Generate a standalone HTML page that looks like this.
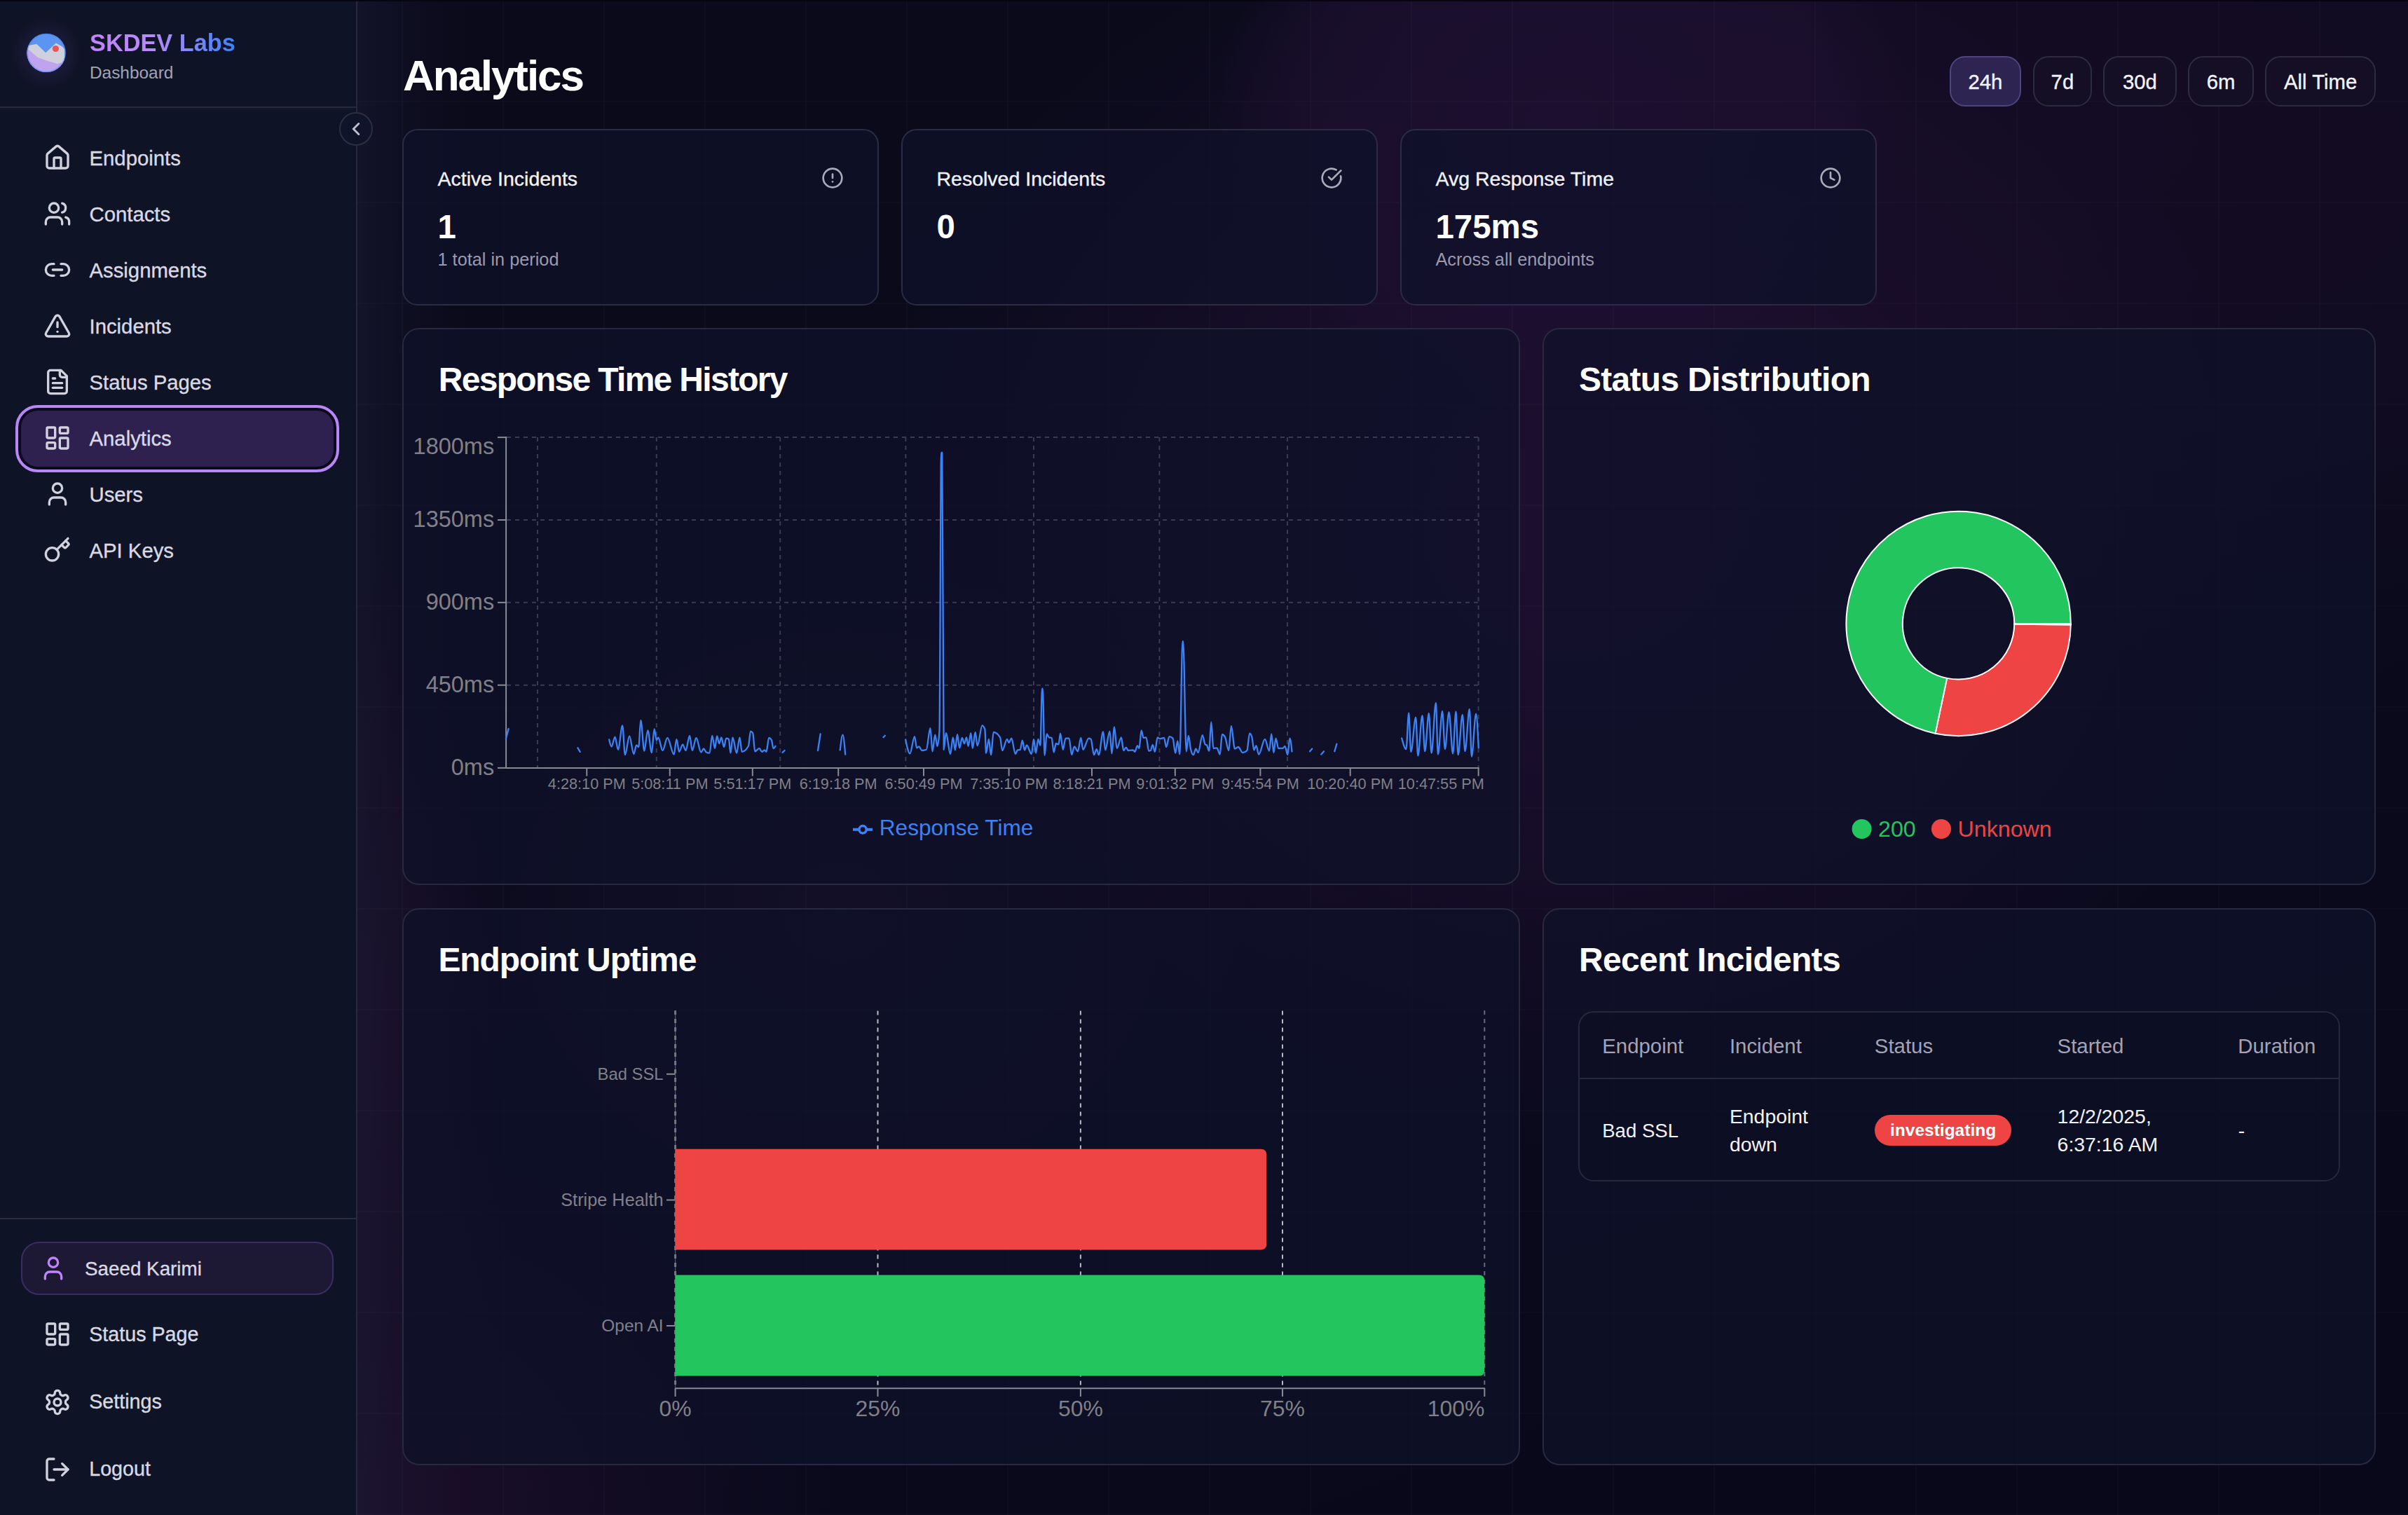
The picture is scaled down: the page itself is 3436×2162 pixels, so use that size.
<!DOCTYPE html><html><head><meta charset="utf-8"><style>
html,body{margin:0;padding:0;}
body{width:3436px;height:2162px;position:relative;overflow:hidden;background:#0b0a1c;font-family:"Liberation Sans",sans-serif;}
.t{position:absolute;white-space:nowrap;}
</style></head><body>
<div style="position:absolute;left:0;top:0;width:3436px;height:2162px;background:radial-gradient(ellipse 1300px 1150px at 2250px 750px, rgba(31,15,50,0.95) 0%, rgba(28,14,46,0.6) 45%, transparent 78%),radial-gradient(ellipse 620px 520px at 2230px 170px, rgba(32,18,54,0.75) 0%, rgba(30,17,50,0.55) 62%, transparent 80%),radial-gradient(ellipse 1500px 850px at 2950px 200px, rgba(20,12,36,0.9) 0%, rgba(20,12,36,0.7) 50%, transparent 85%),radial-gradient(ellipse 1000px 800px at 450px 2162px, rgba(32,15,46,0.9), transparent 75%),radial-gradient(ellipse 800px 700px at 1200px 1300px, rgba(24,20,46,0.6), transparent 75%),radial-gradient(ellipse 260px 900px at 520px 1500px, rgba(34,14,46,0.75), transparent 80%),linear-gradient(160deg,#0a0a1a 0%,#0b0a1c 50%,#08081a 100%);"></div>
<div style="position:absolute;left:510px;top:0px;width:160px;height:2162px;background:linear-gradient(90deg, rgba(26,26,52,0.6) 0%, rgba(24,22,48,0.3) 45%, transparent 100%);"></div>
<div style="position:absolute;left:573px;top:0;width:2px;height:2162px;background:rgba(255,255,255,0.018);"></div><div style="position:absolute;left:717px;top:0;width:2px;height:2162px;background:rgba(255,255,255,0.018);"></div><div style="position:absolute;left:861px;top:0;width:2px;height:2162px;background:rgba(255,255,255,0.018);"></div><div style="position:absolute;left:1005px;top:0;width:2px;height:2162px;background:rgba(255,255,255,0.018);"></div><div style="position:absolute;left:1149px;top:0;width:2px;height:2162px;background:rgba(255,255,255,0.018);"></div><div style="position:absolute;left:1293px;top:0;width:2px;height:2162px;background:rgba(255,255,255,0.018);"></div><div style="position:absolute;left:1437px;top:0;width:2px;height:2162px;background:rgba(255,255,255,0.018);"></div><div style="position:absolute;left:1581px;top:0;width:2px;height:2162px;background:rgba(255,255,255,0.018);"></div><div style="position:absolute;left:1725px;top:0;width:2px;height:2162px;background:rgba(255,255,255,0.018);"></div><div style="position:absolute;left:1869px;top:0;width:2px;height:2162px;background:rgba(255,255,255,0.018);"></div><div style="position:absolute;left:2013px;top:0;width:2px;height:2162px;background:rgba(255,255,255,0.018);"></div><div style="position:absolute;left:2157px;top:0;width:2px;height:2162px;background:rgba(255,255,255,0.018);"></div><div style="position:absolute;left:2301px;top:0;width:2px;height:2162px;background:rgba(255,255,255,0.018);"></div><div style="position:absolute;left:2445px;top:0;width:2px;height:2162px;background:rgba(255,255,255,0.018);"></div><div style="position:absolute;left:2589px;top:0;width:2px;height:2162px;background:rgba(255,255,255,0.018);"></div><div style="position:absolute;left:2733px;top:0;width:2px;height:2162px;background:rgba(255,255,255,0.018);"></div><div style="position:absolute;left:2877px;top:0;width:2px;height:2162px;background:rgba(255,255,255,0.018);"></div><div style="position:absolute;left:3021px;top:0;width:2px;height:2162px;background:rgba(255,255,255,0.018);"></div><div style="position:absolute;left:3165px;top:0;width:2px;height:2162px;background:rgba(255,255,255,0.018);"></div><div style="position:absolute;left:3309px;top:0;width:2px;height:2162px;background:rgba(255,255,255,0.018);"></div><div style="position:absolute;left:510px;top:0px;width:2926px;height:2px;background:rgba(255,255,255,0.018);"></div><div style="position:absolute;left:510px;top:144px;width:2926px;height:2px;background:rgba(255,255,255,0.018);"></div><div style="position:absolute;left:510px;top:288px;width:2926px;height:2px;background:rgba(255,255,255,0.018);"></div><div style="position:absolute;left:510px;top:432px;width:2926px;height:2px;background:rgba(255,255,255,0.018);"></div><div style="position:absolute;left:510px;top:576px;width:2926px;height:2px;background:rgba(255,255,255,0.018);"></div><div style="position:absolute;left:510px;top:720px;width:2926px;height:2px;background:rgba(255,255,255,0.018);"></div><div style="position:absolute;left:510px;top:864px;width:2926px;height:2px;background:rgba(255,255,255,0.018);"></div><div style="position:absolute;left:510px;top:1008px;width:2926px;height:2px;background:rgba(255,255,255,0.018);"></div><div style="position:absolute;left:510px;top:1152px;width:2926px;height:2px;background:rgba(255,255,255,0.018);"></div><div style="position:absolute;left:510px;top:1296px;width:2926px;height:2px;background:rgba(255,255,255,0.018);"></div><div style="position:absolute;left:510px;top:1440px;width:2926px;height:2px;background:rgba(255,255,255,0.018);"></div><div style="position:absolute;left:510px;top:1584px;width:2926px;height:2px;background:rgba(255,255,255,0.018);"></div><div style="position:absolute;left:510px;top:1728px;width:2926px;height:2px;background:rgba(255,255,255,0.018);"></div><div style="position:absolute;left:510px;top:1872px;width:2926px;height:2px;background:rgba(255,255,255,0.018);"></div><div style="position:absolute;left:510px;top:2016px;width:2926px;height:2px;background:rgba(255,255,255,0.018);"></div><div style="position:absolute;left:510px;top:2160px;width:2926px;height:2px;background:rgba(255,255,255,0.018);"></div>
<div style="position:absolute;left:0px;top:0px;width:3436px;height:2px;box-sizing:border-box;background:#07060f;"></div>
<div style="position:absolute;left:0px;top:2px;width:508px;height:2160px;box-sizing:border-box;background:#0f1326;"></div>
<div style="position:absolute;left:508px;top:2px;width:2px;height:2160px;box-sizing:border-box;background:#262a3c;"></div>
<div style="position:absolute;left:0px;top:152px;width:508px;height:2px;box-sizing:border-box;background:#262a3c;"></div>
<div style="position:absolute;left:0px;top:1738px;width:508px;height:2px;box-sizing:border-box;background:#2a2b3f;"></div>
<div style="position:absolute;left:10px;top:20px;width:112px;height:112px;border-radius:50%;background:radial-gradient(circle, rgba(120,80,200,0.22), transparent 65%);"></div>
<svg style="position:absolute;left:30px;top:40px" width="72" height="72" viewBox="0 0 72 72"><defs><clipPath id="lc"><circle cx="36.1" cy="35.5" r="27.6"/></clipPath></defs><g clip-path="url(#lc)"><rect x="0" y="0" width="72" height="72" fill="#5b95f2"/><path d="M0,26 L12,24.7 L22.3,22.8 L35.2,35.2 L49.9,21.4 L58.9,26.6 L62,30 L62,50 L50,62 L20,64 L6,50 Z" fill="#d0d0dc"/><path d="M0,31 L11,31 L24,42 L38,47 L52,51 L58,49 L56,60 L40,66 L20,66 L6,56 Z" fill="#bfa3ef"/><circle cx="49.4" cy="29.5" r="4.6" fill="#e8545a"/></g><circle cx="36.1" cy="35.5" r="27" fill="none" stroke="#4a86ee" stroke-width="1.6" stroke-opacity="0.6"/></svg>
<div class="t" style="left:128.00px;top:43.56px;font-size:34.3px;line-height:34.3px;color:#fff;font-weight:700;background:linear-gradient(90deg,#c084fc 0%,#b68af9 45%,#3b82f6 100%);-webkit-background-clip:text;background-clip:text;color:transparent;">SKDEV Labs</div>
<div class="t" style="left:128.00px;top:91.94px;font-size:24.4px;line-height:24.4px;color:#a3a3b3;">Dashboard</div>
<div style="position:absolute;left:484px;top:160px;width:48px;height:48px;box-sizing:border-box;border-radius:50%;border:2px solid #2b2f42;background:#10142a;"></div>
<svg style="position:absolute;left:493px;top:169px;" width="30" height="30" viewBox="0 0 24 24" fill="none" stroke="#bdbdcb" stroke-width="2.4" stroke-linecap="round" stroke-linejoin="round"><path d="m15 18-6-6 6-6"/></svg>
<div style="position:absolute;left:22px;top:578px;width:462px;height:96px;box-sizing:border-box;border:4px solid #b986f6;border-radius:32px;background:#2e2150;box-shadow:inset 0 0 0 4px #0a0a1a;"></div>
<svg style="position:absolute;left:62px;top:205px;" width="40" height="40" viewBox="0 0 24 24" fill="none" stroke="#d2d2de" stroke-width="2" stroke-linecap="round" stroke-linejoin="round"><path d="M15 21v-8a1 1 0 0 0-1-1h-4a1 1 0 0 0-1 1v8"/><path d="M3 10a2 2 0 0 1 .709-1.528l7-5.999a2 2 0 0 1 2.582 0l7 5.999A2 2 0 0 1 21 10v9a2 2 0 0 1-2 2H5a2 2 0 0 1-2-2z"/></svg>
<div class="t" style="left:127.50px;top:211.19px;font-size:29.3px;line-height:29.3px;color:#d9d9e3;-webkit-text-stroke:0.35px currentColor;">Endpoints</div>
<svg style="position:absolute;left:62px;top:285px;" width="40" height="40" viewBox="0 0 24 24" fill="none" stroke="#d2d2de" stroke-width="2" stroke-linecap="round" stroke-linejoin="round"><path d="M16 21v-2a4 4 0 0 0-4-4H6a4 4 0 0 0-4 4v2"/><path d="M16 3.128a4 4 0 0 1 0 7.744"/><path d="M22 21v-2a4 4 0 0 0-3-3.87"/><circle cx="9" cy="7" r="4"/></svg>
<div class="t" style="left:127.50px;top:291.19px;font-size:29.3px;line-height:29.3px;color:#d9d9e3;-webkit-text-stroke:0.35px currentColor;">Contacts</div>
<svg style="position:absolute;left:62px;top:365px;" width="40" height="40" viewBox="0 0 24 24" fill="none" stroke="#d2d2de" stroke-width="2" stroke-linecap="round" stroke-linejoin="round"><path d="M9 17H7A5 5 0 0 1 7 7h2"/><path d="M15 7h2a5 5 0 1 1 0 10h-2"/><line x1="8" x2="16" y1="12" y2="12"/></svg>
<div class="t" style="left:127.50px;top:371.19px;font-size:29.3px;line-height:29.3px;color:#d9d9e3;-webkit-text-stroke:0.35px currentColor;">Assignments</div>
<svg style="position:absolute;left:62px;top:445px;" width="40" height="40" viewBox="0 0 24 24" fill="none" stroke="#d2d2de" stroke-width="2" stroke-linecap="round" stroke-linejoin="round"><path d="m21.73 18-8-14a2 2 0 0 0-3.48 0l-8 14A2 2 0 0 0 4 21h16a2 2 0 0 0 1.73-3"/><path d="M12 9v4"/><path d="M12 17h.01"/></svg>
<div class="t" style="left:127.50px;top:451.19px;font-size:29.3px;line-height:29.3px;color:#d9d9e3;-webkit-text-stroke:0.35px currentColor;">Incidents</div>
<svg style="position:absolute;left:62px;top:525px;" width="40" height="40" viewBox="0 0 24 24" fill="none" stroke="#d2d2de" stroke-width="2" stroke-linecap="round" stroke-linejoin="round"><path d="M15 2H6a2 2 0 0 0-2 2v16a2 2 0 0 0 2 2h12a2 2 0 0 0 2-2V7Z"/><path d="M14 2v4a2 2 0 0 0 2 2h4"/><path d="M10 9H8"/><path d="M16 13H8"/><path d="M16 17H8"/></svg>
<div class="t" style="left:127.50px;top:531.19px;font-size:29.3px;line-height:29.3px;color:#d9d9e3;-webkit-text-stroke:0.35px currentColor;">Status Pages</div>
<svg style="position:absolute;left:62px;top:605px;" width="40" height="40" viewBox="0 0 24 24" fill="none" stroke="#d2d2de" stroke-width="2" stroke-linecap="round" stroke-linejoin="round"><rect width="7" height="9" x="3" y="3" rx="1"/><rect width="7" height="5" x="14" y="3" rx="1"/><rect width="7" height="9" x="14" y="12" rx="1"/><rect width="7" height="5" x="3" y="16" rx="1"/></svg>
<div class="t" style="left:127.50px;top:611.19px;font-size:29.3px;line-height:29.3px;color:#d9d9e3;-webkit-text-stroke:0.35px currentColor;">Analytics</div>
<svg style="position:absolute;left:62px;top:685px;" width="40" height="40" viewBox="0 0 24 24" fill="none" stroke="#d2d2de" stroke-width="2" stroke-linecap="round" stroke-linejoin="round"><path d="M19 21v-2a4 4 0 0 0-4-4H9a4 4 0 0 0-4 4v2"/><circle cx="12" cy="7" r="4"/></svg>
<div class="t" style="left:127.50px;top:691.19px;font-size:29.3px;line-height:29.3px;color:#d9d9e3;-webkit-text-stroke:0.35px currentColor;">Users</div>
<svg style="position:absolute;left:62px;top:765px;" width="40" height="40" viewBox="0 0 24 24" fill="none" stroke="#d2d2de" stroke-width="2" stroke-linecap="round" stroke-linejoin="round"><path d="m15.5 7.5 2.3 2.3a1 1 0 0 0 1.4 0l2.1-2.1a1 1 0 0 0 0-1.4L19 4"/><path d="m21 2-9.6 9.6"/><circle cx="7.5" cy="15.5" r="5.5"/></svg>
<div class="t" style="left:127.50px;top:771.19px;font-size:29.3px;line-height:29.3px;color:#d9d9e3;-webkit-text-stroke:0.35px currentColor;">API Keys</div>
<div style="position:absolute;left:30px;top:1772px;width:446px;height:76px;box-sizing:border-box;background:#1d1934;border:2px solid #3a2d66;border-radius:26px;"></div>
<svg style="position:absolute;left:56px;top:1790px;" width="40" height="40" viewBox="0 0 24 24" fill="none" stroke="#c084fc" stroke-width="2" stroke-linecap="round" stroke-linejoin="round"><path d="M19 21v-2a4 4 0 0 0-4-4H9a4 4 0 0 0-4 4v2"/><circle cx="12" cy="7" r="4"/></svg>
<div class="t" style="left:121.00px;top:1796.96px;font-size:27.8px;line-height:27.8px;color:#d9d9e3;-webkit-text-stroke:0.35px currentColor;">Saeed Karimi</div>
<svg style="position:absolute;left:62px;top:1884.4px;" width="40" height="40" viewBox="0 0 24 24" fill="none" stroke="#d2d2de" stroke-width="2" stroke-linecap="round" stroke-linejoin="round"><rect width="7" height="9" x="3" y="3" rx="1"/><rect width="7" height="5" x="14" y="3" rx="1"/><rect width="7" height="9" x="14" y="12" rx="1"/><rect width="7" height="5" x="3" y="16" rx="1"/></svg>
<div class="t" style="left:127.20px;top:1890.10px;font-size:28.7px;line-height:28.7px;color:#d9d9e3;-webkit-text-stroke:0.35px currentColor;">Status Page</div>
<svg style="position:absolute;left:62px;top:1980.5px;" width="40" height="40" viewBox="0 0 24 24" fill="none" stroke="#d2d2de" stroke-width="2" stroke-linecap="round" stroke-linejoin="round"><path d="M12.22 2h-.44a2 2 0 0 0-2 2v.18a2 2 0 0 1-1 1.73l-.43.25a2 2 0 0 1-2 0l-.15-.08a2 2 0 0 0-2.73.73l-.22.38a2 2 0 0 0 .73 2.73l.15.1a2 2 0 0 1 1 1.72v.51a2 2 0 0 1-1 1.74l-.15.09a2 2 0 0 0-.73 2.73l.22.38a2 2 0 0 0 2.73.73l.15-.08a2 2 0 0 1 2 0l.43.25a2 2 0 0 1 1 1.73V20a2 2 0 0 0 2 2h.44a2 2 0 0 0 2-2v-.18a2 2 0 0 1 1-1.73l.43-.25a2 2 0 0 1 2 0l.15.08a2 2 0 0 0 2.73-.73l.22-.39a2 2 0 0 0-.73-2.73l-.15-.08a2 2 0 0 1-1-1.74v-.5a2 2 0 0 1 1-1.74l.15-.09a2 2 0 0 0 .73-2.73l-.22-.38a2 2 0 0 0-2.73-.73l-.15.08a2 2 0 0 1-2 0l-.43-.25a2 2 0 0 1-1-1.73V4a2 2 0 0 0-2-2z"/><circle cx="12" cy="12" r="3"/></svg>
<div class="t" style="left:127.20px;top:1986.20px;font-size:28.7px;line-height:28.7px;color:#d9d9e3;-webkit-text-stroke:0.35px currentColor;">Settings</div>
<svg style="position:absolute;left:62px;top:2076.5px;" width="40" height="40" viewBox="0 0 24 24" fill="none" stroke="#d2d2de" stroke-width="2" stroke-linecap="round" stroke-linejoin="round"><path d="m16 17 5-5-5-5"/><path d="M21 12H9"/><path d="M9 21H5a2 2 0 0 1-2-2V5a2 2 0 0 1 2-2h4"/></svg>
<div class="t" style="left:127.20px;top:2082.20px;font-size:28.7px;line-height:28.7px;color:#d9d9e3;-webkit-text-stroke:0.35px currentColor;">Logout</div>
<div class="t" style="left:575.00px;top:76.80px;font-size:62px;line-height:62px;color:#fff;font-weight:700;letter-spacing:-2.1px;">Analytics</div>
<div style="position:absolute;left:2781.6px;top:80px;width:102.70000000000027px;height:72px;box-sizing:border-box;background:#2d2452;border:2px solid #4b4680;border-radius:22px;"></div>
<div class="t" style="left:2682.95px;top:101.69px;font-size:29.3px;line-height:29.3px;color:#f4f4f8;width:300px;text-align:center;-webkit-text-stroke:0.35px currentColor;">24h</div>
<div style="position:absolute;left:2901px;top:80px;width:83.80000000000018px;height:72px;box-sizing:border-box;background:#150f26;border:2px solid #2c2c40;border-radius:22px;"></div>
<div class="t" style="left:2792.90px;top:101.69px;font-size:29.3px;line-height:29.3px;color:#f4f4f8;width:300px;text-align:center;-webkit-text-stroke:0.35px currentColor;">7d</div>
<div style="position:absolute;left:3001.3px;top:80px;width:104.29999999999973px;height:72px;box-sizing:border-box;background:#150f26;border:2px solid #2c2c40;border-radius:22px;"></div>
<div class="t" style="left:2903.45px;top:101.69px;font-size:29.3px;line-height:29.3px;color:#f4f4f8;width:300px;text-align:center;-webkit-text-stroke:0.35px currentColor;">30d</div>
<div style="position:absolute;left:3122.4px;top:80px;width:93.5px;height:72px;box-sizing:border-box;background:#150f26;border:2px solid #2c2c40;border-radius:22px;"></div>
<div class="t" style="left:3019.15px;top:101.69px;font-size:29.3px;line-height:29.3px;color:#f4f4f8;width:300px;text-align:center;-webkit-text-stroke:0.35px currentColor;">6m</div>
<div style="position:absolute;left:3232.4px;top:80px;width:157.4000000000001px;height:72px;box-sizing:border-box;background:#150f26;border:2px solid #2c2c40;border-radius:22px;"></div>
<div class="t" style="left:3161.10px;top:101.69px;font-size:29.3px;line-height:29.3px;color:#f4f4f8;width:300px;text-align:center;-webkit-text-stroke:0.35px currentColor;">All Time</div>
<div style="position:absolute;left:574px;top:184px;width:680px;height:252px;box-sizing:border-box;background:rgba(15,18,42,0.74);border:2px solid #2b2c44;border-radius:22px;"></div>
<div class="t" style="left:624.50px;top:240.57px;font-size:28.5px;line-height:28.5px;color:#f2f2f6;-webkit-text-stroke:0.35px currentColor;">Active Incidents</div>
<div class="t" style="left:624.50px;top:299.87px;font-size:47.4px;line-height:47.4px;color:#ffffff;font-weight:700;">1</div>
<div class="t" style="left:624.50px;top:357.88px;font-size:25.3px;line-height:25.3px;color:#9a9aae;">1 total in period</div>
<svg style="position:absolute;left:1172px;top:238px;" width="32" height="32" viewBox="0 0 24 24" fill="none" stroke="#aaaab9" stroke-width="2" stroke-linecap="round" stroke-linejoin="round"><circle cx="12" cy="12" r="10"/><line x1="12" x2="12" y1="8" y2="12"/><line x1="12" x2="12.01" y1="16" y2="16"/></svg>
<div style="position:absolute;left:1286px;top:184px;width:680px;height:252px;box-sizing:border-box;background:rgba(15,18,42,0.74);border:2px solid #2b2c44;border-radius:22px;"></div>
<div class="t" style="left:1336.50px;top:240.57px;font-size:28.5px;line-height:28.5px;color:#f2f2f6;-webkit-text-stroke:0.35px currentColor;">Resolved Incidents</div>
<div class="t" style="left:1336.50px;top:299.87px;font-size:47.4px;line-height:47.4px;color:#ffffff;font-weight:700;">0</div>
<svg style="position:absolute;left:1884px;top:238px;" width="32" height="32" viewBox="0 0 24 24" fill="none" stroke="#aaaab9" stroke-width="2" stroke-linecap="round" stroke-linejoin="round"><path d="M21.801 10A10 10 0 1 1 17 3.335"/><path d="m9 11 3 3L22 4"/></svg>
<div style="position:absolute;left:1998px;top:184px;width:680px;height:252px;box-sizing:border-box;background:rgba(15,18,42,0.74);border:2px solid #2b2c44;border-radius:22px;"></div>
<div class="t" style="left:2048.50px;top:240.57px;font-size:28.5px;line-height:28.5px;color:#f2f2f6;-webkit-text-stroke:0.35px currentColor;">Avg Response Time</div>
<div class="t" style="left:2048.50px;top:299.87px;font-size:47.4px;line-height:47.4px;color:#ffffff;font-weight:700;">175ms</div>
<div class="t" style="left:2048.50px;top:357.88px;font-size:25.3px;line-height:25.3px;color:#9a9aae;">Across all endpoints</div>
<svg style="position:absolute;left:2596px;top:238px;" width="32" height="32" viewBox="0 0 24 24" fill="none" stroke="#aaaab9" stroke-width="2" stroke-linecap="round" stroke-linejoin="round"><circle cx="12" cy="12" r="10"/><polyline points="12 6 12 12 16 14"/></svg>
<div style="position:absolute;left:574px;top:468px;width:1595px;height:795px;box-sizing:border-box;background:rgba(15,18,42,0.74);border:2px solid #28283e;border-radius:24px;"></div>
<div style="position:absolute;left:2201px;top:468px;width:1189px;height:795px;box-sizing:border-box;background:rgba(15,18,42,0.74);border:2px solid #28283e;border-radius:24px;"></div>
<div style="position:absolute;left:574px;top:1296px;width:1595px;height:795px;box-sizing:border-box;background:rgba(15,18,42,0.74);border:2px solid #28283e;border-radius:24px;"></div>
<div style="position:absolute;left:2201px;top:1296px;width:1189px;height:795px;box-sizing:border-box;background:rgba(15,18,42,0.74);border:2px solid #28283e;border-radius:24px;"></div>
<div class="t" style="left:625.70px;top:517.86px;font-size:48px;line-height:48px;color:#fff;font-weight:700;letter-spacing:-1.69px;">Response Time History</div>
<div class="t" style="left:2252.90px;top:517.86px;font-size:48px;line-height:48px;color:#fff;font-weight:700;letter-spacing:-0.7px;">Status Distribution</div>
<div class="t" style="left:625.40px;top:1345.86px;font-size:48px;line-height:48px;color:#fff;font-weight:700;letter-spacing:-1.07px;">Endpoint Uptime</div>
<div class="t" style="left:2253.00px;top:1346.36px;font-size:48px;line-height:48px;color:#fff;font-weight:700;letter-spacing:-0.7px;">Recent Incidents</div>
<svg style="position:absolute;left:0;top:0" width="3436" height="2162" viewBox="0 0 3436 2162"><line x1="723" y1="624.1" x2="2109.6" y2="624.1" stroke="#3a3b52" stroke-width="2" stroke-dasharray="6 6"/>
<line x1="723" y1="742.0" x2="2109.6" y2="742.0" stroke="#3a3b52" stroke-width="2" stroke-dasharray="6 6"/>
<line x1="723" y1="859.8" x2="2109.6" y2="859.8" stroke="#3a3b52" stroke-width="2" stroke-dasharray="6 6"/>
<line x1="723" y1="977.7" x2="2109.6" y2="977.7" stroke="#3a3b52" stroke-width="2" stroke-dasharray="6 6"/>
<line x1="767" y1="624.1" x2="767" y2="1095.5" stroke="#3a3b52" stroke-width="2" stroke-dasharray="6 6"/>
<line x1="936.8" y1="624.1" x2="936.8" y2="1095.5" stroke="#3a3b52" stroke-width="2" stroke-dasharray="6 6"/>
<line x1="1113.2" y1="624.1" x2="1113.2" y2="1095.5" stroke="#3a3b52" stroke-width="2" stroke-dasharray="6 6"/>
<line x1="1292.3" y1="624.1" x2="1292.3" y2="1095.5" stroke="#3a3b52" stroke-width="2" stroke-dasharray="6 6"/>
<line x1="1475" y1="624.1" x2="1475" y2="1095.5" stroke="#3a3b52" stroke-width="2" stroke-dasharray="6 6"/>
<line x1="1654.4" y1="624.1" x2="1654.4" y2="1095.5" stroke="#3a3b52" stroke-width="2" stroke-dasharray="6 6"/>
<line x1="1837" y1="624.1" x2="1837" y2="1095.5" stroke="#3a3b52" stroke-width="2" stroke-dasharray="6 6"/>
<line x1="2109.6" y1="624.1" x2="2109.6" y2="1095.5" stroke="#3a3b52" stroke-width="2" stroke-dasharray="6 6"/>
<line x1="722.1" y1="623" x2="722.1" y2="1096.5" stroke="#8a8a92" stroke-width="2"/>
<line x1="721" y1="1095.9" x2="2110.6" y2="1095.9" stroke="#8a8a92" stroke-width="2"/>
<line x1="710" y1="624.1" x2="722" y2="624.1" stroke="#8a8a92" stroke-width="2"/>
<line x1="710" y1="742.0" x2="722" y2="742.0" stroke="#8a8a92" stroke-width="2"/>
<line x1="710" y1="859.8" x2="722" y2="859.8" stroke="#8a8a92" stroke-width="2"/>
<line x1="710" y1="977.7" x2="722" y2="977.7" stroke="#8a8a92" stroke-width="2"/>
<line x1="710" y1="1095.9" x2="722" y2="1095.9" stroke="#8a8a92" stroke-width="2"/>
<line x1="837.3" y1="1096" x2="837.3" y2="1107.5" stroke="#8a8a92" stroke-width="2"/>
<line x1="955.8" y1="1096" x2="955.8" y2="1107.5" stroke="#8a8a92" stroke-width="2"/>
<line x1="1073.8" y1="1096" x2="1073.8" y2="1107.5" stroke="#8a8a92" stroke-width="2"/>
<line x1="1196.2" y1="1096" x2="1196.2" y2="1107.5" stroke="#8a8a92" stroke-width="2"/>
<line x1="1318" y1="1096" x2="1318" y2="1107.5" stroke="#8a8a92" stroke-width="2"/>
<line x1="1439.6" y1="1096" x2="1439.6" y2="1107.5" stroke="#8a8a92" stroke-width="2"/>
<line x1="1558" y1="1096" x2="1558" y2="1107.5" stroke="#8a8a92" stroke-width="2"/>
<line x1="1676.8" y1="1096" x2="1676.8" y2="1107.5" stroke="#8a8a92" stroke-width="2"/>
<line x1="1798.4" y1="1096" x2="1798.4" y2="1107.5" stroke="#8a8a92" stroke-width="2"/>
<line x1="1926.7" y1="1096" x2="1926.7" y2="1107.5" stroke="#8a8a92" stroke-width="2"/>
<line x1="2109.6" y1="1096" x2="2109.6" y2="1107.5" stroke="#8a8a92" stroke-width="2"/>
<path d="M721.9,1054.2 L725.6,1039.9" fill="none" stroke="#3b82f6" stroke-width="2.3" stroke-linejoin="round" stroke-linecap="round"/>
<path d="M824.4,1067.3 L827.7,1072.9" fill="none" stroke="#3b82f6" stroke-width="2.3" stroke-linejoin="round" stroke-linecap="round"/>
<path d="M869.2,1055.4 C870.35,1060.42 871.47,1065.40 872.6,1065.4 C874.25,1065.40 875.92,1051.70 877.6,1051.7 C879.03,1051.70 880.48,1069.76 881.9,1069.8 C884.01,1069.76 886.09,1035.51 888.2,1035.5 C889.41,1035.51 890.66,1077.24 891.9,1077.2 C893.98,1077.24 896.06,1050.45 898.1,1050.5 C900.21,1050.45 902.28,1075.99 904.4,1076.0 C905.61,1075.99 906.85,1063.54 908.1,1063.5 C909.14,1063.54 910.17,1066.03 911.2,1066.0 C912.25,1066.03 913.29,1028.03 914.3,1028.0 C915.99,1028.03 917.65,1071.63 919.3,1071.6 C920.97,1071.63 922.63,1042.36 924.3,1042.4 C926.16,1042.36 928.03,1074.12 929.9,1074.1 C931.15,1074.12 932.39,1040.49 933.6,1040.5 C934.68,1040.49 935.71,1056.06 936.8,1056.1 C937.58,1056.06 938.41,1052.32 939.2,1052.3 C941.32,1052.32 943.40,1071.01 945.5,1071.0 C947.76,1071.01 950.04,1052.95 952.3,1052.9 C955.44,1052.95 958.55,1076.62 961.7,1076.6 C962.91,1076.62 964.16,1054.81 965.4,1054.8 C966.65,1054.81 967.90,1072.88 969.1,1072.9 C970.80,1072.88 972.46,1062.29 974.1,1062.3 C975.58,1062.29 977.03,1071.01 978.5,1071.0 C980.35,1071.01 982.22,1049.83 984.1,1049.8 C985.34,1049.83 986.58,1071.01 987.8,1071.0 C989.70,1071.01 991.57,1052.95 993.4,1052.9 C995.72,1052.95 998.00,1073.50 1000.3,1073.5 C1001.53,1073.50 1002.78,1068.52 1004.0,1068.5 C1005.27,1068.52 1006.52,1072.85 1007.8,1073.5 C1009.34,1074.33 1010.92,1074.75 1012.5,1074.7 C1013.74,1074.75 1014.98,1049.83 1016.2,1049.8 C1017.47,1049.83 1018.72,1067.90 1020.0,1067.9 C1021.00,1067.90 1022.04,1050.45 1023.1,1050.5 C1024.12,1050.45 1025.16,1061.04 1026.2,1061.0 C1027.23,1061.04 1028.27,1052.32 1029.3,1052.3 C1030.56,1052.32 1031.80,1066.03 1033.0,1066.0 C1034.09,1066.03 1035.12,1053.57 1036.2,1053.6 C1037.41,1053.57 1038.65,1053.98 1039.9,1054.8 C1040.73,1055.37 1041.56,1074.75 1042.4,1074.7 C1043.43,1074.75 1044.47,1052.32 1045.5,1052.3 C1047.37,1052.32 1049.24,1074.75 1051.1,1074.7 C1052.56,1074.75 1054.02,1052.32 1055.5,1052.3 C1056.51,1052.32 1057.55,1072.88 1058.6,1072.9 C1061.70,1072.88 1064.81,1070.18 1067.9,1064.8 C1068.97,1062.98 1070.01,1043.60 1071.0,1043.6 C1072.08,1043.60 1073.12,1044.43 1074.2,1046.1 C1075.20,1047.76 1076.23,1072.26 1077.3,1072.3 C1079.35,1072.26 1081.43,1067.90 1083.5,1067.9 C1084.75,1067.90 1085.99,1072.88 1087.2,1072.9 C1088.49,1072.88 1089.73,1070.39 1091.0,1070.4 C1091.81,1070.39 1092.64,1072.88 1093.5,1072.9 C1094.71,1072.88 1095.96,1052.95 1097.2,1052.9 C1098.45,1052.95 1099.70,1053.98 1100.9,1056.1 C1101.77,1057.45 1102.60,1067.90 1103.4,1067.9 C1104.47,1067.90 1105.51,1066.34 1106.5,1064.8" fill="none" stroke="#3b82f6" stroke-width="2.3" stroke-linejoin="round" stroke-linecap="round"/>
<path d="M1116.5,1073.8 L1119.6,1071.0" fill="none" stroke="#3b82f6" stroke-width="2.3" stroke-linejoin="round" stroke-linecap="round"/>
<path d="M1167.0,1071.0 L1170.7,1047.3" fill="none" stroke="#3b82f6" stroke-width="2.3" stroke-linejoin="round" stroke-linecap="round"/>
<path d="M1198.7,1070.4 C1199.98,1059.49 1201.23,1048.59 1202.5,1048.6 C1203.72,1048.59 1204.97,1062.60 1206.2,1076.6" fill="none" stroke="#3b82f6" stroke-width="2.3" stroke-linejoin="round" stroke-linecap="round"/>
<path d="M1260.4,1052.3 L1262.9,1049.8" fill="none" stroke="#3b82f6" stroke-width="2.3" stroke-linejoin="round" stroke-linecap="round"/>
<path d="M1292.2,1055.4 C1294.25,1065.40 1296.33,1075.37 1298.4,1075.4 C1300.60,1075.37 1302.79,1051.08 1305.0,1051.1 C1306.02,1051.08 1307.06,1067.27 1308.1,1067.3 C1309.14,1067.27 1310.17,1065.40 1311.2,1065.4 C1312.67,1065.40 1314.12,1071.01 1315.6,1071.0 C1317.65,1071.01 1319.73,1070.60 1321.8,1069.8 C1323.67,1069.02 1325.54,1039.24 1327.4,1039.2 C1328.45,1039.24 1329.48,1072.26 1330.5,1072.3 C1331.77,1072.26 1333.01,1048.59 1334.3,1048.6 C1335.30,1048.59 1336.34,1064.78 1337.4,1064.8 C1338.41,1064.78 1339.45,1057.72 1340.5,1043.6 C1341.33,1032.22 1342.16,646.00 1343.0,646.0 C1343.43,646.00 1343.87,646.00 1344.3,646.0 C1345.11,646.00 1345.91,1069.76 1346.7,1069.8 C1347.76,1069.76 1348.79,1046.09 1349.8,1046.1 C1351.91,1046.09 1353.98,1075.99 1356.1,1076.0 C1357.31,1075.99 1358.55,1052.32 1359.8,1052.3 C1360.84,1052.32 1361.87,1070.39 1362.9,1070.4 C1363.95,1070.39 1364.99,1047.96 1366.0,1048.0 C1367.07,1047.96 1368.10,1067.27 1369.1,1067.3 C1370.39,1067.27 1371.63,1052.95 1372.9,1052.9 C1373.92,1052.95 1374.96,1061.04 1376.0,1061.0 C1377.03,1061.04 1378.07,1052.32 1379.1,1052.3 C1379.94,1052.32 1380.77,1064.78 1381.6,1064.8 C1382.85,1064.78 1384.09,1046.09 1385.3,1046.1 C1386.17,1046.09 1387.00,1067.90 1387.8,1067.9 C1389.07,1067.90 1390.32,1044.85 1391.6,1044.8 C1392.60,1044.85 1393.64,1064.16 1394.7,1064.2 C1396.96,1064.16 1399.25,1035.51 1401.5,1035.5 C1402.78,1035.51 1404.02,1037.17 1405.3,1040.5 C1405.89,1042.15 1406.52,1074.75 1407.1,1074.7 C1408.38,1074.75 1409.63,1054.81 1410.9,1054.8 C1411.91,1054.81 1412.95,1077.24 1414.0,1077.2 C1415.24,1077.24 1416.48,1044.85 1417.7,1044.8 C1420.84,1044.85 1423.96,1047.34 1427.1,1052.3 C1428.11,1053.98 1429.15,1071.01 1430.2,1071.0 C1432.47,1071.01 1434.75,1054.81 1437.0,1054.8 C1437.87,1054.81 1438.70,1059.80 1439.5,1059.8 C1440.77,1059.80 1442.02,1053.57 1443.3,1053.6 C1445.14,1053.57 1447.00,1075.99 1448.9,1076.0 C1449.91,1075.99 1450.95,1070.73 1452.0,1070.4 C1453.23,1069.97 1454.48,1070.18 1455.7,1069.8 C1456.76,1069.42 1457.80,1056.68 1458.8,1056.7 C1459.88,1056.68 1460.92,1070.39 1462.0,1070.4 C1462.99,1070.39 1464.03,1063.54 1465.1,1063.5 C1467.35,1063.54 1469.64,1075.99 1471.9,1076.0 C1472.96,1075.99 1474.00,1054.81 1475.0,1054.8 C1476.07,1054.81 1477.11,1074.75 1478.1,1074.7 C1479.19,1074.75 1480.23,1054.81 1481.3,1054.8 C1482.30,1054.81 1483.34,1063.54 1484.4,1063.5 C1485.25,1063.54 1486.13,982.70 1487.0,982.7 C1487.27,982.70 1487.53,982.70 1487.8,982.7 C1488.74,982.70 1489.67,1077.86 1490.6,1077.9 C1491.64,1077.86 1492.68,1047.34 1493.7,1047.3 C1494.76,1047.34 1495.80,1051.98 1496.8,1052.3 C1498.08,1052.74 1499.33,1052.53 1500.6,1052.9 C1501.61,1053.29 1502.65,1073.50 1503.7,1073.5 C1504.73,1073.50 1505.76,1061.04 1506.8,1061.0 C1508.05,1061.04 1509.29,1062.29 1510.5,1062.3 C1511.37,1062.29 1512.20,1046.72 1513.0,1046.7 C1514.28,1046.72 1515.52,1069.76 1516.8,1069.8 C1518.01,1069.76 1519.26,1053.57 1520.5,1053.6 C1522.17,1053.57 1523.83,1053.57 1525.5,1053.6 C1526.73,1053.57 1527.98,1077.24 1529.2,1077.2 C1530.47,1077.24 1531.72,1065.40 1533.0,1065.4 C1534.62,1065.40 1536.29,1072.26 1537.9,1072.3 C1539.40,1072.26 1540.85,1052.95 1542.3,1052.9 C1543.35,1052.95 1544.38,1069.76 1545.4,1069.8 C1548.12,1069.76 1550.82,1053.57 1553.5,1053.6 C1554.56,1053.57 1555.60,1053.98 1556.6,1054.8 C1558.09,1055.98 1559.54,1077.24 1561.0,1077.2 C1562.24,1077.24 1563.49,1069.14 1564.7,1069.1 C1565.77,1069.14 1566.81,1077.24 1567.8,1077.2 C1569.92,1077.24 1572.00,1044.23 1574.1,1044.2 C1575.11,1044.23 1576.15,1070.39 1577.2,1070.4 C1579.27,1070.39 1581.34,1043.60 1583.4,1043.6 C1584.46,1043.60 1585.49,1075.37 1586.5,1075.4 C1587.69,1075.37 1588.84,1037.37 1590.0,1037.4 C1591.25,1037.37 1592.49,1067.90 1593.7,1067.9 C1595.81,1067.90 1597.89,1052.32 1600.0,1052.3 C1601.00,1052.32 1602.04,1071.01 1603.1,1071.0 C1604.33,1071.01 1605.57,1066.65 1606.8,1066.7 C1607.86,1066.65 1608.89,1071.01 1609.9,1071.0 C1612.22,1071.01 1614.50,1070.39 1616.8,1070.4 C1617.62,1070.39 1618.45,1072.88 1619.3,1072.9 C1620.52,1072.88 1621.77,1064.16 1623.0,1064.2 C1623.84,1064.16 1624.67,1067.90 1625.5,1067.9 C1626.54,1067.90 1627.58,1042.36 1628.6,1042.4 C1629.66,1042.36 1630.70,1052.95 1631.7,1052.9 C1632.98,1052.95 1634.23,1052.32 1635.5,1052.3 C1636.72,1052.32 1637.96,1071.63 1639.2,1071.6 C1640.04,1071.63 1640.87,1071.43 1641.7,1071.0 C1642.74,1070.49 1643.78,1062.91 1644.8,1062.9 C1645.85,1062.91 1646.89,1072.88 1647.9,1072.9 C1649.18,1072.88 1650.42,1052.32 1651.7,1052.3 C1652.71,1052.32 1653.74,1054.19 1654.8,1054.2 C1656.86,1054.19 1658.93,1052.95 1661.0,1052.9 C1662.05,1052.95 1663.09,1066.03 1664.1,1066.0 C1665.58,1066.03 1667.03,1051.08 1668.5,1051.1 C1670.15,1051.08 1671.81,1051.91 1673.5,1053.6 C1674.71,1054.81 1675.96,1074.75 1677.2,1074.7 C1678.24,1074.75 1679.28,1057.31 1680.3,1057.3 C1681.36,1057.31 1682.40,1076.62 1683.4,1076.6 C1684.76,1076.62 1686.08,915.20 1687.4,915.2 C1687.67,915.20 1687.93,915.20 1688.2,915.2 C1689.73,915.20 1691.25,1072.26 1692.8,1072.3 C1693.82,1072.26 1694.85,1049.83 1695.9,1049.8 C1696.93,1049.83 1697.97,1064.64 1699.0,1069.1 C1700.25,1074.54 1701.50,1077.24 1702.7,1077.2 C1703.99,1077.24 1705.24,1068.52 1706.5,1068.5 C1707.52,1068.52 1708.56,1074.12 1709.6,1074.1 C1711.67,1074.12 1713.75,1049.21 1715.8,1049.2 C1717.07,1049.21 1718.32,1061.04 1719.6,1062.3 C1720.39,1063.12 1721.22,1062.71 1722.1,1063.5 C1723.09,1064.57 1724.13,1071.63 1725.2,1071.6 C1726.21,1071.63 1727.25,1030.52 1728.3,1030.5 C1729.32,1030.52 1730.36,1067.90 1731.4,1067.9 C1733.06,1067.90 1734.72,1067.27 1736.4,1067.3 C1737.83,1067.27 1739.29,1076.62 1740.7,1076.6 C1741.78,1076.62 1742.82,1047.96 1743.9,1048.0 C1745.31,1047.96 1746.76,1049.42 1748.2,1052.3 C1749.88,1055.65 1751.54,1071.01 1753.2,1071.0 C1754.44,1071.01 1755.69,1036.13 1756.9,1036.1 C1758.60,1036.13 1760.26,1068.52 1761.9,1068.5 C1763.58,1068.52 1765.24,1066.03 1766.9,1066.0 C1768.98,1066.03 1771.06,1074.12 1773.1,1074.1 C1775.21,1074.12 1777.28,1073.09 1779.4,1071.0 C1780.61,1069.76 1781.85,1046.72 1783.1,1046.7 C1784.14,1046.72 1785.17,1048.17 1786.2,1051.1 C1787.25,1053.98 1788.29,1070.39 1789.3,1070.4 C1790.37,1070.39 1791.40,1064.16 1792.4,1064.2 C1793.69,1064.16 1794.93,1076.62 1796.2,1076.6 C1799.09,1076.62 1801.99,1054.81 1804.9,1054.8 C1806.98,1054.81 1809.05,1071.63 1811.1,1071.6 C1812.17,1071.63 1813.21,1047.34 1814.2,1047.3 C1815.28,1047.34 1816.32,1074.12 1817.4,1074.1 C1818.40,1074.12 1819.43,1053.57 1820.5,1053.6 C1821.72,1053.57 1822.96,1067.90 1824.2,1067.9 C1826.29,1067.90 1828.36,1067.90 1830.4,1067.9 C1831.48,1067.90 1832.51,1064.78 1833.6,1064.8 C1834.80,1064.78 1836.04,1077.24 1837.3,1077.2 C1838.33,1077.24 1839.37,1053.57 1840.4,1053.6 C1841.44,1053.57 1842.48,1062.91 1843.5,1072.3" fill="none" stroke="#3b82f6" stroke-width="2.3" stroke-linejoin="round" stroke-linecap="round"/>
<path d="M1869.1,1072.3 L1872.2,1068.5" fill="none" stroke="#3b82f6" stroke-width="2.3" stroke-linejoin="round" stroke-linecap="round"/>
<path d="M1885.3,1076.6 L1889.0,1072.3" fill="none" stroke="#3b82f6" stroke-width="2.3" stroke-linejoin="round" stroke-linecap="round"/>
<path d="M1904.3,1072.2 L1907.4,1061.6" fill="none" stroke="#3b82f6" stroke-width="2.3" stroke-linejoin="round" stroke-linecap="round"/>
<path d="M2000.2,1053.5 C2002.30,1061.33 2004.37,1069.12 2006.4,1069.1 C2007.69,1069.12 2008.94,1017.39 2010.2,1017.4 C2011.22,1017.39 2012.26,1072.86 2013.3,1072.9 C2015.58,1072.86 2017.87,1023.62 2020.2,1023.6 C2021.19,1023.62 2022.23,1078.47 2023.3,1078.5 C2025.34,1078.47 2027.42,1021.13 2029.5,1021.1 C2030.74,1021.13 2031.99,1072.23 2033.2,1072.2 C2035.10,1072.23 2036.97,1018.02 2038.8,1018.0 C2040.08,1018.02 2041.33,1074.73 2042.6,1074.7 C2044.65,1074.73 2046.73,1003.06 2048.8,1003.1 C2049.84,1003.06 2050.88,1076.60 2051.9,1076.6 C2054.00,1076.60 2056.07,1014.90 2058.1,1014.9 C2059.39,1014.90 2060.64,1069.12 2061.9,1069.1 C2063.75,1069.12 2065.62,1016.15 2067.5,1016.1 C2069.36,1016.15 2071.23,1075.35 2073.1,1075.4 C2074.55,1075.35 2076.01,1015.52 2077.5,1015.5 C2078.50,1015.52 2079.53,1077.22 2080.6,1077.2 C2082.65,1077.22 2084.73,1019.89 2086.8,1019.9 C2088.05,1019.89 2089.29,1072.23 2090.5,1072.2 C2092.62,1072.23 2094.69,1011.78 2096.8,1011.8 C2097.81,1011.78 2098.84,1079.71 2099.9,1079.7 C2101.96,1079.71 2104.04,1018.64 2106.1,1018.6 C2107.36,1018.64 2108.60,1042.94 2109.8,1067.2" fill="none" stroke="#3b82f6" stroke-width="2.3" stroke-linejoin="round" stroke-linecap="round"/>
<line x1="1217" y1="1183.8" x2="1245" y2="1183.8" stroke="#3b82f6" stroke-width="4"/>
<circle cx="1231.1" cy="1183.8" r="5.2" fill="#111126" stroke="#3b82f6" stroke-width="3.5"/>
<path d="M2954.79,891.58 A160.2,160.2 0 0 1 2761.57,1046.66 L2778.17,967.89 A79.7,79.7 0 0 0 2874.30,890.73 Z" fill="#ef4444" stroke="#ffffff" stroke-width="2"/>
<path d="M2761.57,1046.66 A160.2,160.2 0 1 1 2954.80,889.90 L2874.30,889.90 A79.7,79.7 0 1 0 2778.17,967.89 Z" fill="#22c55e" stroke="#ffffff" stroke-width="2"/>
<path d="M2954.80,889.90 A160.2,160.2 0 0 1 2954.79,891.58 L2874.30,890.73 A79.7,79.7 0 0 0 2874.30,889.90 Z" fill="#3b82f6" stroke="#ffffff" stroke-width="2"/>
<circle cx="2656.6" cy="1183" r="14" fill="#22c55e"/>
<circle cx="2770" cy="1183" r="14" fill="#ef4444"/>
<line x1="1252.5" y1="1442.5" x2="1252.5" y2="1981" stroke="#d9d9e0" stroke-opacity="0.85" stroke-width="2" stroke-dasharray="6 6"/>
<line x1="1541.9" y1="1442.5" x2="1541.9" y2="1981" stroke="#d9d9e0" stroke-opacity="0.85" stroke-width="2" stroke-dasharray="6 6"/>
<line x1="1830" y1="1442.5" x2="1830" y2="1981" stroke="#d9d9e0" stroke-opacity="0.85" stroke-width="2" stroke-dasharray="6 6"/>
<line x1="963.6" y1="1442" x2="963.6" y2="1981" stroke="#4d5370" stroke-width="1.3"/>
<line x1="963.6" y1="1442" x2="963.6" y2="1981" stroke="#76767f" stroke-width="3" stroke-dasharray="6 6"/>
<line x1="2118.3" y1="1442" x2="2118.3" y2="1981" stroke="#6a6a7e" stroke-width="2" stroke-dasharray="6 6"/>
<path d="M963.6,1639.8 H1799.2 Q1807.2,1639.8 1807.2,1647.8 V1775.4 Q1807.2,1783.4 1799.2,1783.4 H963.6 Z" fill="#ef4444"/>
<path d="M963.6,1819.5 H2110.3 Q2118.3,1819.5 2118.3,1827.5 V1955.6 Q2118.3,1963.6 2110.3,1963.6 H963.6 Z" fill="#22c55e"/>
<line x1="963.6" y1="1981.3" x2="2119" y2="1981.3" stroke="#8a8a92" stroke-width="2"/>
<line x1="963.6" y1="1981" x2="963.6" y2="1993" stroke="#8a8a92" stroke-width="2"/>
<line x1="1252.5" y1="1981" x2="1252.5" y2="1993" stroke="#8a8a92" stroke-width="2"/>
<line x1="1541.9" y1="1981" x2="1541.9" y2="1993" stroke="#8a8a92" stroke-width="2"/>
<line x1="1830" y1="1981" x2="1830" y2="1993" stroke="#8a8a92" stroke-width="2"/>
<line x1="2118.3" y1="1981" x2="2118.3" y2="1993" stroke="#8a8a92" stroke-width="2"/>
<line x1="951" y1="1532.8" x2="963" y2="1532.8" stroke="#8a8a92" stroke-width="2"/>
<line x1="951" y1="1712.5" x2="963" y2="1712.5" stroke="#8a8a92" stroke-width="2"/>
<line x1="951" y1="1892" x2="963" y2="1892" stroke="#8a8a92" stroke-width="2"/></svg>
<div class="t" style="left:405.20px;top:621.38px;font-size:32.5px;line-height:32.5px;color:#808089;width:300px;text-align:right;">1800ms</div>
<div class="t" style="left:405.20px;top:725.08px;font-size:32.5px;line-height:32.5px;color:#808089;width:300px;text-align:right;">1350ms</div>
<div class="t" style="left:405.20px;top:842.98px;font-size:32.5px;line-height:32.5px;color:#808089;width:300px;text-align:right;">900ms</div>
<div class="t" style="left:405.20px;top:960.88px;font-size:32.5px;line-height:32.5px;color:#808089;width:300px;text-align:right;">450ms</div>
<div class="t" style="left:405.20px;top:1078.78px;font-size:32.5px;line-height:32.5px;color:#808089;width:300px;text-align:right;">0ms</div>
<div class="t" style="left:687.30px;top:1107.53px;font-size:21.7px;line-height:21.7px;color:#808089;width:300px;text-align:center;">4:28:10 PM</div>
<div class="t" style="left:805.80px;top:1107.53px;font-size:21.7px;line-height:21.7px;color:#808089;width:300px;text-align:center;">5:08:11 PM</div>
<div class="t" style="left:923.80px;top:1107.53px;font-size:21.7px;line-height:21.7px;color:#808089;width:300px;text-align:center;">5:51:17 PM</div>
<div class="t" style="left:1046.20px;top:1107.53px;font-size:21.7px;line-height:21.7px;color:#808089;width:300px;text-align:center;">6:19:18 PM</div>
<div class="t" style="left:1168.00px;top:1107.53px;font-size:21.7px;line-height:21.7px;color:#808089;width:300px;text-align:center;">6:50:49 PM</div>
<div class="t" style="left:1289.60px;top:1107.53px;font-size:21.7px;line-height:21.7px;color:#808089;width:300px;text-align:center;">7:35:10 PM</div>
<div class="t" style="left:1408.00px;top:1107.53px;font-size:21.7px;line-height:21.7px;color:#808089;width:300px;text-align:center;">8:18:21 PM</div>
<div class="t" style="left:1526.80px;top:1107.53px;font-size:21.7px;line-height:21.7px;color:#808089;width:300px;text-align:center;">9:01:32 PM</div>
<div class="t" style="left:1648.40px;top:1107.53px;font-size:21.7px;line-height:21.7px;color:#808089;width:300px;text-align:center;">9:45:54 PM</div>
<div class="t" style="left:1776.70px;top:1107.53px;font-size:21.7px;line-height:21.7px;color:#808089;width:300px;text-align:center;">10:20:40 PM</div>
<div class="t" style="left:1817.80px;top:1107.53px;font-size:21.7px;line-height:21.7px;color:#808089;width:300px;text-align:right;">10:47:55 PM</div>
<div class="t" style="left:1254.80px;top:1165.54px;font-size:31.6px;line-height:31.6px;color:#3b82f6;">Response Time</div>
<div class="t" style="left:2680.00px;top:1166.74px;font-size:32.2px;line-height:32.2px;color:#22c55e;">200</div>
<div class="t" style="left:2793.50px;top:1166.74px;font-size:32.2px;line-height:32.2px;color:#ef4444;">Unknown</div>
<div class="t" style="left:646.50px;top:1521.35px;font-size:23.8px;line-height:23.8px;color:#808089;width:300px;text-align:right;">Bad SSL</div>
<div class="t" style="left:646.50px;top:1699.78px;font-size:25.3px;line-height:25.3px;color:#808089;width:300px;text-align:right;">Stripe Health</div>
<div class="t" style="left:646.50px;top:1880.04px;font-size:24.4px;line-height:24.4px;color:#808089;width:300px;text-align:right;">Open AI</div>
<div class="t" style="left:863.60px;top:1994.79px;font-size:31.9px;line-height:31.9px;color:#808089;width:200px;text-align:center;">0%</div>
<div class="t" style="left:1152.50px;top:1994.79px;font-size:31.9px;line-height:31.9px;color:#808089;width:200px;text-align:center;">25%</div>
<div class="t" style="left:1441.90px;top:1994.79px;font-size:31.9px;line-height:31.9px;color:#808089;width:200px;text-align:center;">50%</div>
<div class="t" style="left:1730.00px;top:1994.79px;font-size:31.9px;line-height:31.9px;color:#808089;width:200px;text-align:center;">75%</div>
<div class="t" style="left:1918.30px;top:1994.79px;font-size:31.9px;line-height:31.9px;color:#808089;width:200px;text-align:right;">100%</div>
<div style="position:absolute;left:2252px;top:1443px;width:1087px;height:243px;box-sizing:border-box;border:2px solid #262840;border-radius:22px;background:rgba(10,12,30,0.18);"></div>
<div style="position:absolute;left:2254px;top:1537.7px;width:1083px;height:2.0px;box-sizing:border-box;background:#262840;"></div>
<div class="t" style="left:2286.20px;top:1477.71px;font-size:29.4px;line-height:29.4px;color:#a3a3b5;">Endpoint</div>
<div class="t" style="left:2467.90px;top:1477.71px;font-size:29.4px;line-height:29.4px;color:#a3a3b5;">Incident</div>
<div class="t" style="left:2674.80px;top:1477.71px;font-size:29.4px;line-height:29.4px;color:#a3a3b5;">Status</div>
<div class="t" style="left:2935.60px;top:1477.71px;font-size:29.4px;line-height:29.4px;color:#a3a3b5;">Started</div>
<div class="t" style="left:3193.30px;top:1477.71px;font-size:29.4px;line-height:29.4px;color:#a3a3b5;">Duration</div>
<div class="t" style="left:2286.20px;top:1599.63px;font-size:27.6px;line-height:27.6px;color:#f2f2f6;">Bad SSL</div>
<div class="t" style="left:2467.90px;top:1579.45px;font-size:28.4px;line-height:28.4px;color:#f2f2f6;">Endpoint</div>
<div class="t" style="left:2467.90px;top:1619.45px;font-size:28.4px;line-height:28.4px;color:#f2f2f6;">down</div>
<div class="t" style="left:2935.60px;top:1579.45px;font-size:28.4px;line-height:28.4px;color:#f2f2f6;">12/2/2025,</div>
<div class="t" style="left:2935.60px;top:1619.45px;font-size:28.4px;line-height:28.4px;color:#f2f2f6;">6:37:16 AM</div>
<div class="t" style="left:3193.80px;top:1598.95px;font-size:28.4px;line-height:28.4px;color:#f2f2f6;">-</div>
<div style="position:absolute;left:2674.8px;top:1591px;width:195.5999999999999px;height:44px;box-sizing:border-box;background:#ef4444;border-radius:22px;"></div>
<div class="t" style="left:2622.60px;top:1600.76px;font-size:24.5px;line-height:24.5px;color:#ffffff;font-weight:700;width:300px;text-align:center;">investigating</div>
</body></html>
